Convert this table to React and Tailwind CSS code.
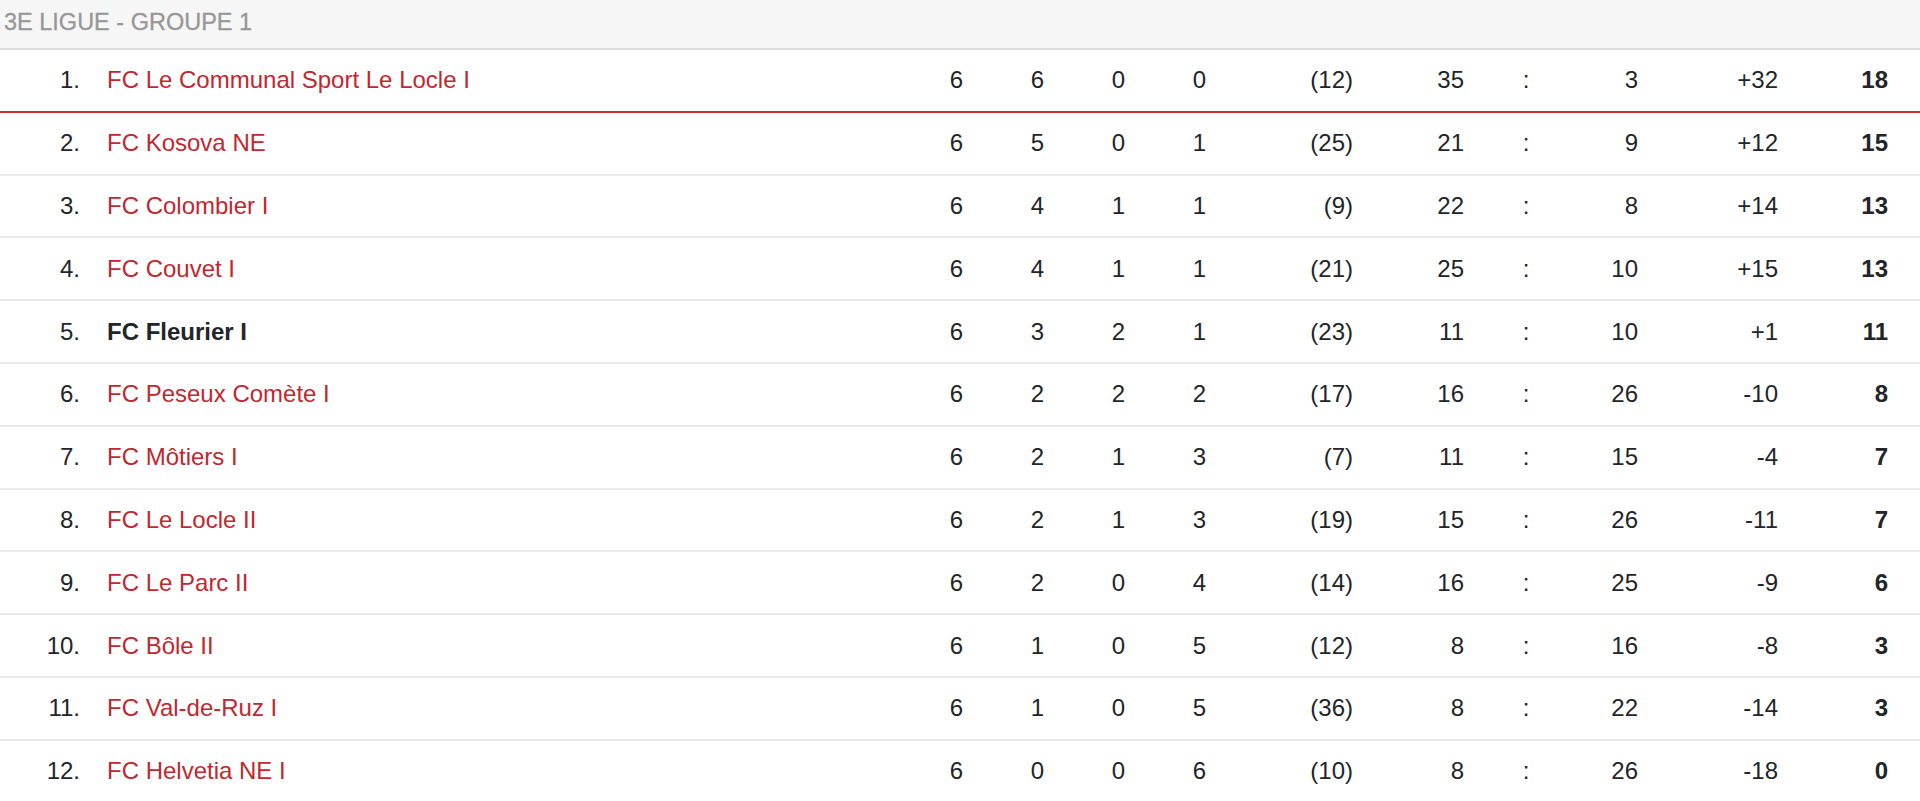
import React from "react";

// Ranking data: rank, team, played, won, drawn, lost, fair-play, goals for, goals against, diff, points
const rows = [
    [1, "FC Le Communal Sport Le Locle I", 6, 6, 0, 0, 12, 35, 3, "+32", 18],
    [2, "FC Kosova NE", 6, 5, 0, 1, 25, 21, 9, "+12", 15],
    [3, "FC Colombier I", 6, 4, 1, 1, 9, 22, 8, "+14", 13],
    [4, "FC Couvet I", 6, 4, 1, 1, 21, 25, 10, "+15", 13],
    [5, "FC Fleurier I", 6, 3, 2, 1, 23, 11, 10, "+1", 11],
    [6, "FC Peseux Comète I", 6, 2, 2, 2, 17, 16, 26, "-10", 8],
    [7, "FC Môtiers I", 6, 2, 1, 3, 7, 11, 15, "-4", 7],
    [8, "FC Le Locle II", 6, 2, 1, 3, 19, 15, 26, "-11", 7],
    [9, "FC Le Parc II", 6, 2, 0, 4, 14, 16, 25, "-9", 6],
    [10, "FC Bôle II", 6, 1, 0, 5, 12, 8, 16, "-8", 3],
    [11, "FC Val-de-Ruz I", 6, 1, 0, 5, 36, 8, 22, "-14", 3],
    [12, "FC Helvetia NE I", 6, 0, 0, 6, 10, 8, 26, "-18", 0],
];

const HIGHLIGHT = 5;

export default function App() {
    return (
        <div className="w-[1920px] bg-white text-[#212529] font-['Liberation_Sans',Arial,sans-serif] overflow-hidden h-[801px]">
            <div className="h-[50px] bg-[#f6f6f6] border-b-2 border-[#dcdcdc] flex items-start pt-[11px] pl-[4px]">
                <span className="text-[23.5px] text-[#979797] leading-none [-webkit-text-stroke:0.3px_#979797]">3E LIGUE - GROUPE 1</span>
            </div>
            {rows.map((r, i) => {
                const [rank, team, p, w, d, l, fp, gf, ga, diff, pts] = r;
                const mine = rank === HIGHLIGHT;
                return (
                    <div
                        key={rank}
                        className={`grid grid-cols-[80px_802px_81px_81px_81px_81px_147px_111px_124px_50px_140px_110px_32px] items-center h-[62.8px] text-[24px] border-b-2 ${
                            i === 0 ? 'border-[#c8313a]' : 'border-[#e9ebee]'
                        }`}
                    >
                        <div className="text-right">{rank}.</div>
                        <div className={`pl-[27px] whitespace-nowrap ${mine ? 'font-bold text-[#212529]' : 'text-[#c2272f]'}`}>{team}</div>
                        <div className="text-right">{p}</div>
                        <div className="text-right">{w}</div>
                        <div className="text-right">{d}</div>
                        <div className="text-right">{l}</div>
                        <div className="text-right">({fp})</div>
                        <div className="text-right">{gf}</div>
                        <div className="text-center">:</div>
                        <div className="text-right">{ga}</div>
                        <div className="text-right">{diff}</div>
                        <div className="text-right font-bold">{pts}</div>
                        <div />
                    </div>
                );
            })}
        </div>
    );
}
